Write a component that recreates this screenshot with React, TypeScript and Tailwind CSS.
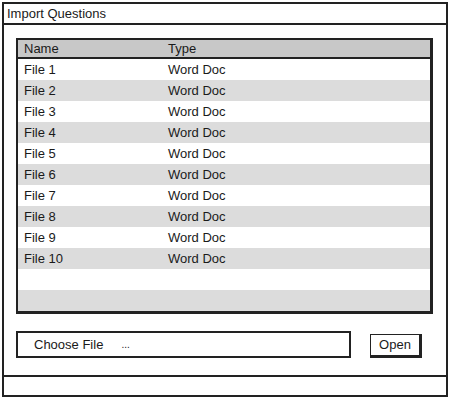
import React from "react";

const files = Array.from({ length: 10 }, (_, i) => `File ${i + 1}`);

export default function App() {
  const rows = [...files, "", ""];
  return (
    <div
      className="w-[450px] h-[400px] bg-white relative text-[13px] text-[#1a1a1a]"
      style={{ fontFamily: '"Liberation Sans", Arial, sans-serif' }}
    >
      <div className="absolute left-[2px] top-[2px] w-[446px] h-[395px] border-2 border-[#222] flex flex-col">
        <div className="h-[21px] border-b-2 border-[#222] flex items-center pl-[3px] pb-[1px] leading-none">
          Import Questions
        </div>
        <div className="flex-1 flex flex-col pl-[12px] pr-[11px] pt-[13px]">
          <div className="w-[417px] border-2 border-[#222] border-r-[3px] border-b-[3px] flex flex-col">
            <div className="h-[19px] bg-[#c8c8c8] border-b-2 border-[#222] flex items-center leading-none">
              <div className="w-[150px] pl-[6px]">Name</div>
              <div>Type</div>
            </div>
            {rows.map((r, i) => (
              <div
                key={i}
                className={`h-[21px] flex items-center leading-none ${i % 2 === 1 ? "bg-[#dcdcdc]" : "bg-white"}`}
              >
                <div className="w-[150px] pl-[6px]">{r}</div>
                <div>{r ? "Word Doc" : ""}</div>
              </div>
            ))}
          </div>
          <div className="flex items-center mt-[17px]">
            <div className="w-[335px] h-[27px] border-2 border-[#222] flex items-center pl-[16px] leading-none">
              <span>Choose File</span>
              <span className="ml-[18px] text-[10px]">...</span>
            </div>
            <div className="ml-[19px] mt-[2px] w-[52px] h-[24px] border border-[#222] border-r-[3px] border-b-[3px] flex items-center justify-center leading-none">
              Open
            </div>
          </div>
        </div>
        <div className="h-[20px] border-t-2 border-[#222]" />
      </div>
    </div>
  );
}
